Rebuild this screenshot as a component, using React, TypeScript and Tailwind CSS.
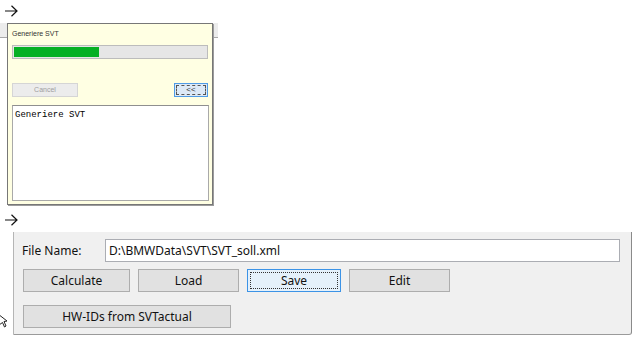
import React from "react";

function Arrow() {
  return (
    <svg width="14" height="12" viewBox="0 0 14 12" className="block">
      <path d="M1 6 H13 M7.5 0.8 L13 6 L7.5 11.2" fill="none" stroke="#111" strokeWidth="1.2" />
    </svg>
  );
}

function WinButton({ label, width, focused }: { label: string; width: string; focused?: boolean }) {
  if (focused) {
    return (
      <div className={`${width} h-[23px] border border-[#3c93e6] bg-[#e5f1fb] p-[2px]`}>
        <div className="w-full h-full border border-dotted border-[#333] flex items-center justify-center text-[12px] text-[#111]">
          {label}
        </div>
      </div>
    );
  }
  return (
    <div className={`${width} h-[23px] border border-[#adadad] bg-[#e1e1e1] flex items-center justify-center text-[12px] text-[#111]`}>
      {label}
    </div>
  );
}

export default function App() {
  return (
    <div className="w-[640px] h-[343px] bg-white relative overflow-hidden font-['Noto_Sans',sans-serif]">
      {/* first capture: progress dialog */}
      <div className="pl-[4px] pt-[5px]">
        <Arrow />
      </div>

      <div className="relative w-[218px] mt-[6px]">
        <div className="absolute left-0 top-0 w-[218px] h-[15px] bg-[#ececec] border-b border-[#a8a8a8]" />
        <div className="relative ml-[7px] w-[206px] h-[182px] border border-[#777] bg-[#ffffe3] shadow-[1px_1px_0_#9c9c9c] pl-[4px] pr-[3px] flex flex-col">
          <div className="pt-[5px] h-[14px] text-[7px] leading-[9px] text-[#333] font-['Liberation_Sans',sans-serif]">
            Generiere SVT
          </div>
          <div className="mt-[7px] w-[196px] h-[14px] bg-[#e6e6e6] border border-[#bcbcbc] p-[1px]">
            <div className="w-[85px] h-full bg-[#06b025]" />
          </div>
          <div className="mt-[24px] w-[196px] h-[14px] flex justify-between">
            <div className="w-[66px] h-full border border-[#d5d5d5] bg-[#ececec] flex items-center justify-center text-[7px] text-[#a0a0a0] font-['Liberation_Sans',sans-serif]">
              Cancel
            </div>
            <div className="w-[34px] h-full border border-[#4f9be6] bg-[#dce9f7] p-[1px]">
              <div className="w-full h-full border border-dashed border-[#555] flex items-center justify-center text-[8px] leading-none text-[#333] font-['Liberation_Sans',sans-serif]">
                &lt;&lt;
              </div>
            </div>
          </div>
          <div className="mt-[8px] w-[197px] h-[96px] bg-white border border-[#a9a9a9] border-t-[#8f8f8f] px-[2px] pt-[4px]">
            <div className="text-[9px] leading-[11px] text-black font-['Liberation_Mono',monospace] whitespace-pre">
              Generiere SVT
            </div>
          </div>
        </div>
      </div>

      {/* second capture: SVT file panel */}
      <div className="pl-[4px] mt-[9px]">
        <Arrow />
      </div>

      <div className="ml-[13px] mt-[6px] w-[619px] h-[103px] bg-[#f0f0f0] border-l border-l-[#b5b5b5] border-r border-r-[#8a8a8a] border-b border-b-[#9a9a9a] rounded-br-[3px] flex flex-col">
        <div className="pt-[7px] pl-[8px] flex items-center">
          <div className="w-[83px] text-[12px] text-[#111]">File Name:</div>
          <div className="w-[515px] h-[23px] bg-white border border-[#abadb3] flex items-center pl-[3px] text-[12px] text-[#111]">
            D:\BMWData\SVT\SVT_soll.xml
          </div>
        </div>
        <div className="mt-[7px] pl-[9px] flex gap-[8px]">
          <WinButton label="Calculate" width="w-[107px]" />
          <WinButton label="Load" width="w-[101px]" />
          <WinButton label="Save" width="w-[94px]" focused />
          <WinButton label="Edit" width="w-[101px]" />
        </div>
        <div className="mt-[13px] pl-[9px] flex">
          <WinButton label="HW-IDs from SVTactual" width="w-[208px]" />
        </div>
      </div>

      {/* cut-off mouse pointer */}
      <svg width="10" height="16" viewBox="0 0 10 16" className="absolute left-0 top-[313px]">
        <path d="M-2 1 L7 8 L4 8.5 L6 13 L4.5 14 L2.5 9.5 L-1 12" fill="#fff" stroke="#222" strokeWidth="1" />
      </svg>
    </div>
  );
}
